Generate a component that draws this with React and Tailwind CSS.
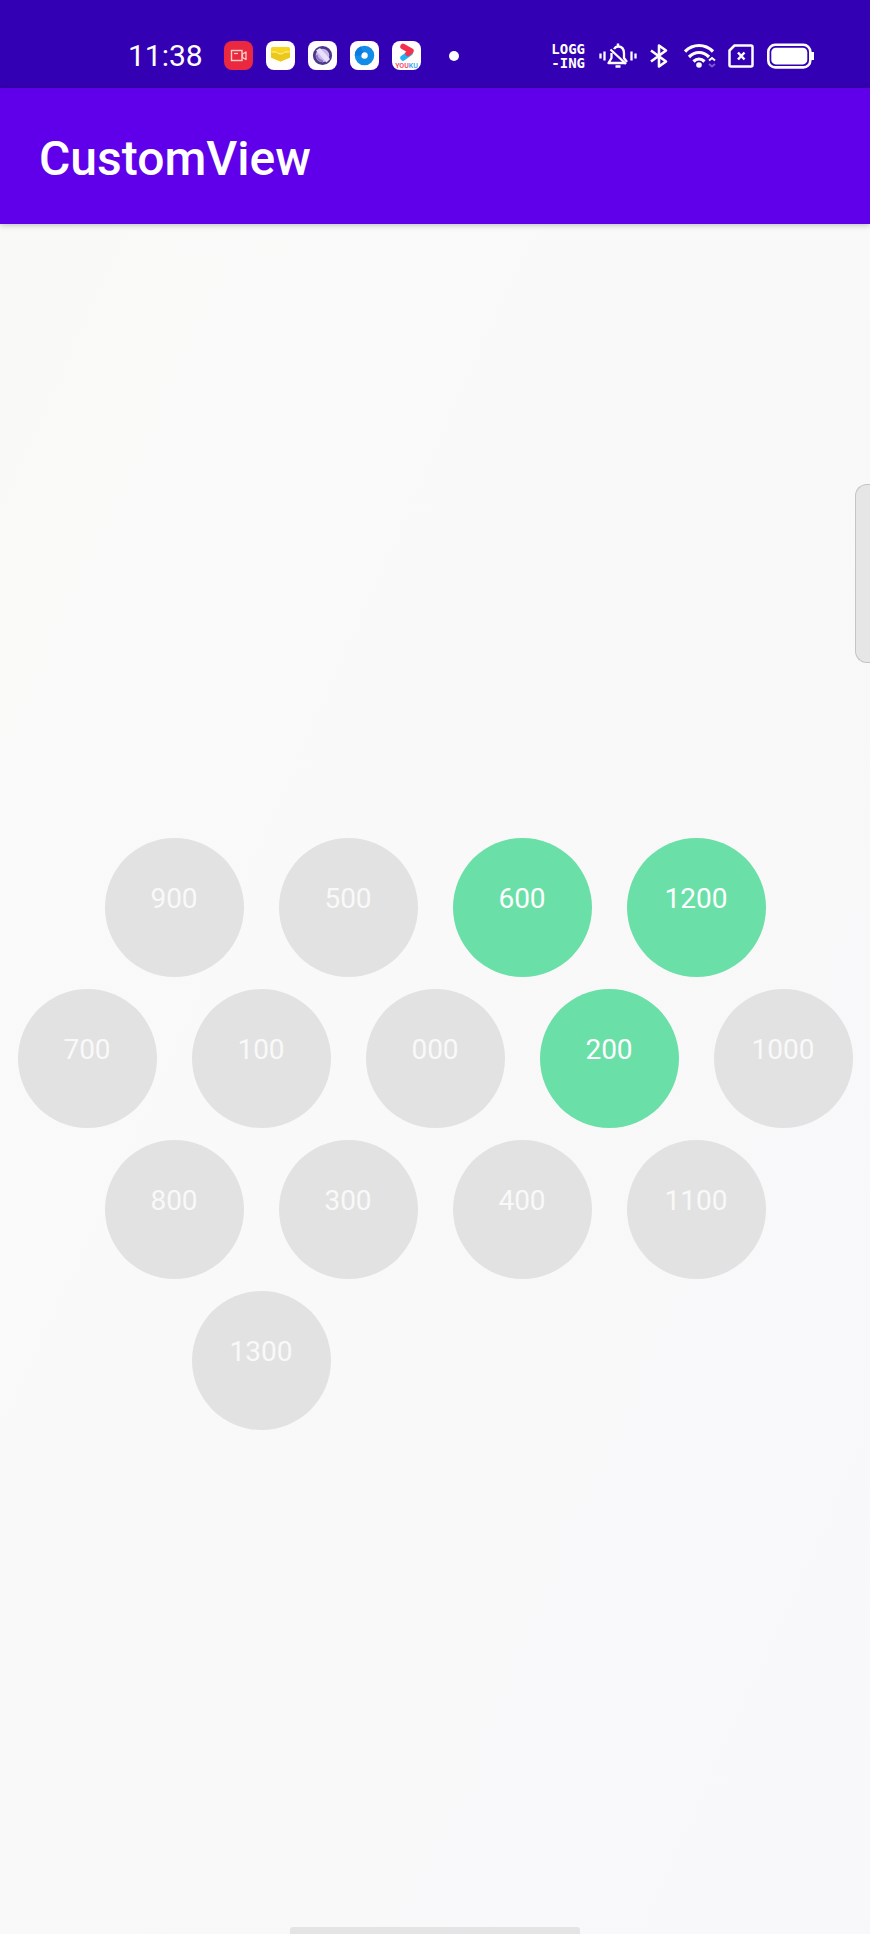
const rows = [
  { items: [900, 500, 600, 1200], className: 'justify-center' },
  { items: [700, 100, '000', 200, 1000], className: 'justify-center' },
  { items: [800, 300, 400, 1100], className: 'justify-center' },
  { items: [1300], className: 'justify-start pl-[174px]' },
];

const selected = [600, 1200, 200];

function AppIcons() {
  return (
    <div className="flex items-center gap-[13px]">
      <svg className="size-[29px]" viewBox="0 0 29 29" fill="none">
        <rect width="29" height="29" rx="8" fill="#ea2840" />
        <rect x="7.5" y="9.500" width="10.500" height="10" stroke="#ffd0c4" strokeWidth="1.400" />
        <path d="M18.500 13l3.500-2v7.500l-3.500-2z" stroke="#ffd0c4" strokeWidth="1.300" strokeLinejoin="round" />
        <path d="M10 12.500h4" stroke="#ffd0c4" strokeWidth="1.200" />
      </svg>
      <svg className="size-[29px]" viewBox="0 0 29 29" fill="none">
        <rect width="29" height="29" rx="8" fill="#fffefa" />
        <path d="M5 7.500Q5 6 6.500 6h16Q24 6 24 7.500V16.500l-9.500 4L5 16.500z" fill="#f7d51f" />
        <path d="M5 11h5.500q1 2 4 2t4-2H24v5.500l-9.500 4L5 16.500z" fill="#ecc81c" />
        <path d="M5.500 11h5q1 2 4 2t4-2h5" stroke="#fff3a0" strokeWidth="1" />
      </svg>
      <svg className="size-[29px]" viewBox="0 0 29 29" fill="none">
        <rect width="29" height="29" rx="8" fill="#fffdfd" />
        <circle cx="14.500" cy="14.500" r="8.200" fill="#c9b7ec" stroke="#4b3889" strokeWidth="2.800" />
        <path d="M8 9.500l4-2.500 10 11-3.500 3.500z" fill="#e8e0fb" />
        <path d="M8.500 14q1 5 6.500 6.500" stroke="#8b74c8" strokeWidth="2" />
      </svg>
      <svg className="size-[29px]" viewBox="0 0 29 29" fill="none">
        <rect width="29" height="29" rx="8" fill="#fffefd" />
        <circle cx="14.500" cy="14.500" r="6.500" stroke="#128be9" strokeWidth="6.500" />
        <path d="M8 14.500a6.500 6.500 0 0 1 4-6" stroke="#0b7be0" strokeWidth="6.500" />
      </svg>
      <svg className="size-[29px]" viewBox="0 0 29 29" fill="none">
        <rect width="29" height="29" rx="8" fill="#fffefd" />
        <path d="M11 17L18 12" stroke="#22b4f2" strokeWidth="5.500" strokeLinecap="round" />
        <path d="M11 5.500l8 4.500-3 2.500" stroke="#f5304f" strokeWidth="5.500" strokeLinecap="round" strokeLinejoin="round" />
        <text x="14.500" y="27" textAnchor="middle" fontFamily="Roboto, sans-serif" fontWeight="500" fontSize="7">
          <tspan fill="#f5304f">YOU</tspan>
          <tspan fill="#22a4f2">KU</tspan>
        </text>
      </svg>
    </div>
  );
}

function SystemIcons() {
  return (
    <div className="flex items-center text-white">
      <div className="font-['DejaVu_Sans_Mono',monospace] text-[14px] leading-[14px] font-bold">
        <div>LOGG</div>
        <div>-ING</div>
      </div>
      <svg className="ml-[14px] h-[26px] w-[38px]" viewBox="0 0 38 26" fill="none" stroke="currentColor" strokeWidth="2.300">
        <path d="M1.500 10.500v5M5.500 8.500v9M32.500 8.500v9M36.500 10.500v5" />
        <path d="M15 6Q16.500 3.500 19 3.500q6 0 6 7v4.500l3 4" />
        <path d="M12.500 10v5L9.500 20H26" strokeLinejoin="round" />
        <path d="M11.500 6.500L27 21" />
        <path d="M19 .5v3" strokeWidth="2.500" />
        <path d="M16.500 23.500h5" strokeWidth="2.500" />
      </svg>
      <svg className="ml-[13px] h-[26px] w-[18px]" viewBox="0 0 18 26" fill="none" stroke="currentColor" strokeWidth="2.600" strokeLinejoin="round">
        <path d="M1 7.500l15 11-7 5V2.500l7 5-15 11" />
      </svg>
      <svg className="ml-[16px] h-[26px] w-[32px]" viewBox="0 0 32 26" fill="none" stroke="currentColor" strokeWidth="3.200">
        <path d="M1 8.500Q7 2.500 15 2.500t14 6" />
        <path d="M5 14q4.500-4.500 10-4.500t10 4.500" />
        <path d="M9.500 18.500q2.500-2.500 5.500-2.500t5.500 2.500" />
        <circle cx="15" cy="22" r="2.800" fill="currentColor" stroke="none" />
        <path d="M25 17.500l3-2.500 3 2.500" strokeWidth="2" />
        <path d="M25 21l3 2.500 3-2.500" strokeWidth="2" opacity=".35" />
      </svg>
      <svg className="ml-[12px] h-[26px] w-[26px]" viewBox="0 0 26 26" fill="none" stroke="currentColor" strokeWidth="2.500" strokeLinejoin="round">
        <path d="M6.500 2.500H23q1.500 0 1.500 1.500v18q0 1.500-1.500 1.500H3q-1.500 0-1.500-1.500V7.500z" />
        <path d="M10 9.500l6.500 7m0-7l-6.500 7" />
      </svg>
      <svg className="ml-[13px] h-[26px] w-[48px]" viewBox="0 0 48 26" fill="none">
        <rect x="1.300" y="1.800" width="42" height="22.600" rx="7" stroke="white" strokeWidth="2.600" />
        <rect x="4.300" y="4.800" width="36" height="16.600" rx="4.500" fill="white" />
        <path d="M44 9h3v8h-3z" fill="white" />
      </svg>
    </div>
  );
}

export default function App() {
  return (
    <div className="relative flex min-h-screen flex-col overflow-hidden bg-[#f9f9f9] bg-linear-to-br from-[#f9faf8] via-[#f9f9f9] to-[#f8f7fa] font-['Roboto',sans-serif]">
      <div className="flex h-[88px] items-center justify-between bg-[#3400b3] pt-[23px] pr-[55px] pl-[128px]">
        <div className="flex items-center">
          <time className="w-[96px] text-[30px] leading-[32px] text-white">11:38</time>
          <AppIcons />
          <span className="ml-[28px] size-[10px] rounded-full bg-white" />
        </div>
        <SystemIcons />
      </div>
      <header className="flex h-[136px] items-center bg-[#6000eb] px-[39px] pt-1.5 shadow-[0_1px_6px_rgba(0,0,0,0.25)]">
        <h1 className="text-[48px] leading-[56px] font-medium text-white">CustomView</h1>
      </header>
      <main className="flex flex-1 flex-col items-center pt-[614px]">
        <div className="flex flex-col gap-3">
          {rows.map((row) => (
            <div key={row.items[0]} className={`flex gap-[35px] ${row.className}`}>
              {row.items.map((value) => (
                <button
                  key={value}
                  type="button"
                  aria-pressed={selected.includes(value)}
                  className={`flex size-[139px] shrink-0 items-center justify-center rounded-full pb-[17px] text-[28px] leading-[32px] ${
                    selected.includes(value) ? 'bg-[#6bdfa8] text-white' : 'bg-[#e2e2e2] text-[#f9f9f9]'
                  }`}
                >
                  {value}
                </button>
              ))}
            </div>
          ))}
        </div>
      </main>
      <div className="absolute top-[484px] right-0 h-[179px] w-[15px] rounded-l-[12px] border border-r-0 border-[#c4c4c4] bg-[#e6e6e6]" />
      <div className="mx-auto h-[7px] w-1/3 rounded-t-[3px] bg-[#e4e4e4]" />
    </div>
  );
}
